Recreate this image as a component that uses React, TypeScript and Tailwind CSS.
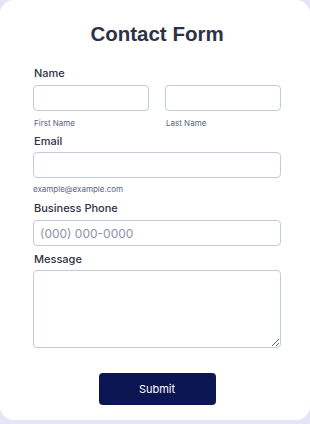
export default function App() {
  const font = { fontFamily: 'Inter, "Liberation Sans", sans-serif' };
  const title = { fontFamily: '"Liberation Sans", Arial, sans-serif' };
  return (
    <div className="min-h-[424px] w-[310px] bg-[#e6e5f7]" style={font}>
      <div className="h-[420px] rounded-[14px] bg-white pr-[29px] pl-[33px] pt-[21px]">
        <h1 className="text-center text-[20.5px] leading-[26px] font-bold text-[#2c3345]" style={title}>
          Contact Form
        </h1>

        {/* Name */}
        <label className="mt-[18px] block pl-px text-[11px] leading-4 font-medium text-[#2c3345]">Name</label>
        <div className="mt-1 grid grid-cols-2 gap-4">
          <div>
            <input className="block h-[26px] w-full rounded-[4px] border border-[#c3cad8] bg-white" />
            <div className="mt-[6px] pl-px text-[8px] leading-3 text-[#57647e]">First Name</div>
          </div>
          <div>
            <input className="block h-[26px] w-full rounded-[4px] border border-[#c3cad8] bg-white" />
            <div className="mt-[6px] pl-px text-[8px] leading-3 text-[#57647e]">Last Name</div>
          </div>
        </div>

        {/* Email */}
        <label className="mt-1 block pl-px text-[11px] leading-4 font-medium text-[#2c3345]">Email</label>
        <input className="mt-[3px] block h-[26px] w-full rounded-[4px] border border-[#c3cad8] bg-white" />
        <div className="mt-[5px] text-[8px] leading-3 text-[#57647e]">example@example.com</div>

        {/* Phone */}
        <label className="mt-[5px] block pl-px text-[11px] leading-4 font-medium text-[#2c3345]">Business Phone</label>
        <input
          placeholder="(000) 000-0000"
          className="mt-1 block h-[26px] w-full rounded-[4px] border border-[#c3cad8] bg-white px-[6px] text-[12px] text-[#2c3345] placeholder:text-[#8c94a8]"
        />

        {/* Message */}
        <label className="mt-[5px] block pl-px text-[11px] leading-4 font-medium text-[#2c3345]">Message</label>
        <textarea className="mt-[3px] block h-[78px] w-full rounded-[4px] border border-[#c3cad8] bg-white" />

        <div className="mt-[25px] flex justify-center">
          <button className="h-[32px] w-[117px] rounded-[4px] bg-[#0c1652] text-[11px] text-white">Submit</button>
        </div>
      </div>
    </div>
  );
}
